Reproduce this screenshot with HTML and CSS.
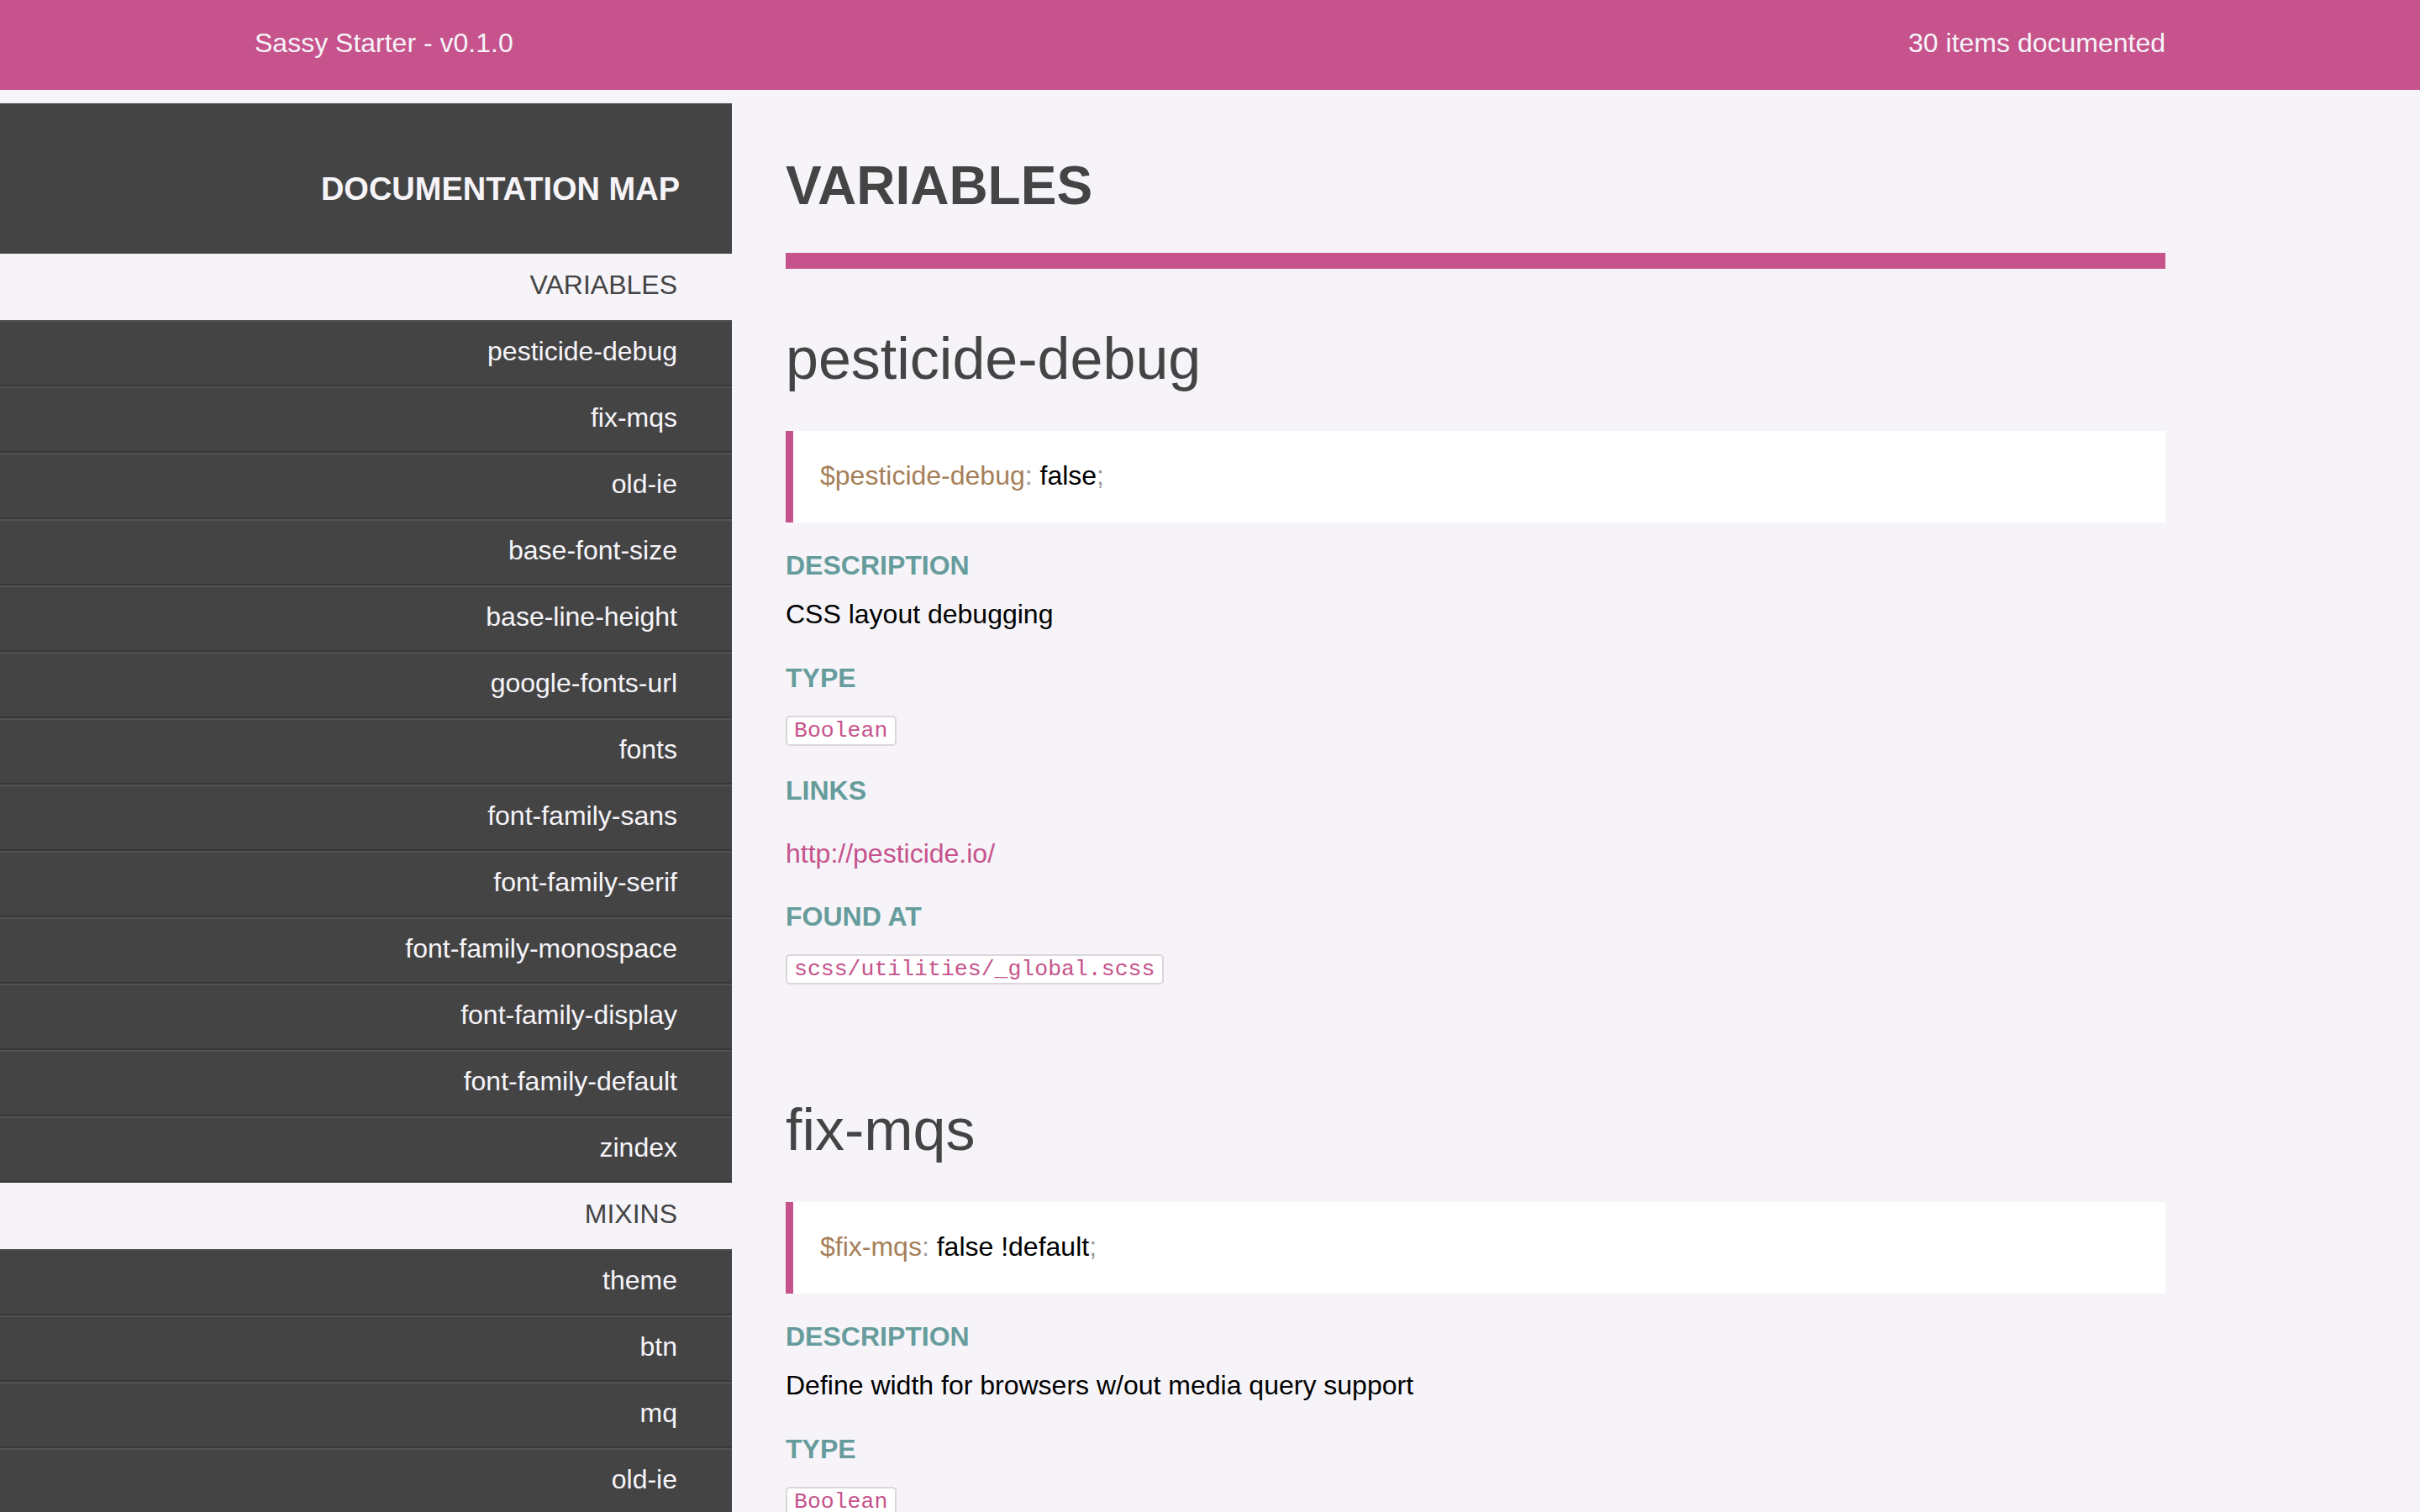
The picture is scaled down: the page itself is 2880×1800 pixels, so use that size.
FILE: index.html
```html
<!DOCTYPE html>
<html lang="en">
<head>
<meta charset="utf-8">
<title>Sassy Starter - v0.1.0</title>
<link rel="stylesheet" href="styles.css">
</head>
<body>
<header class="topbar">
  <div class="topbar-inner">
    <span class="project">Sassy Starter - v0.1.0</span>
    <span class="count">30 items documented</span>
  </div>
</header>
<div class="layout">
  <nav class="sidebar">
    <div class="sidebar-title">DOCUMENTATION MAP</div>
    <div class="group-label">VARIABLES</div>
    <ul class="nav-list">
      <li class="nav-item">pesticide-debug</li>
      <li class="nav-item">fix-mqs</li>
      <li class="nav-item">old-ie</li>
      <li class="nav-item">base-font-size</li>
      <li class="nav-item">base-line-height</li>
      <li class="nav-item">google-fonts-url</li>
      <li class="nav-item">fonts</li>
      <li class="nav-item">font-family-sans</li>
      <li class="nav-item">font-family-serif</li>
      <li class="nav-item">font-family-monospace</li>
      <li class="nav-item">font-family-display</li>
      <li class="nav-item">font-family-default</li>
      <li class="nav-item">zindex</li>
    </ul>
    <div class="group-label">MIXINS</div>
    <ul class="nav-list">
      <li class="nav-item">theme</li>
      <li class="nav-item">btn</li>
      <li class="nav-item">mq</li>
      <li class="nav-item">old-ie</li>
    </ul>
  </nav>
  <main class="content">
    <h1 class="section-title">VARIABLES</h1>
    <section class="item">
      <h2 class="item-name">pesticide-debug</h2>
      <pre class="code-block"><code><span class="tok-var">$pesticide-debug</span><span class="tok-punc">:</span> false<span class="tok-punc">;</span></code></pre>
      <h3 class="item-label">DESCRIPTION</h3>
      <p class="item-text">CSS layout debugging</p>
      <h3 class="item-label">TYPE</h3>
      <div class="tags"><code class="tag">Boolean</code></div>
      <h3 class="item-label label-links">LINKS</h3>
      <p class="item-text item-link"><a class="link" href="#">http://pesticide.io/</a></p>
      <h3 class="item-label">FOUND AT</h3>
      <div class="tags"><code class="tag">scss/utilities/_global.scss</code></div>
    </section>
    <section class="item">
      <h2 class="item-name">fix-mqs</h2>
      <pre class="code-block"><code><span class="tok-var">$fix-mqs</span><span class="tok-punc">:</span> false !default<span class="tok-punc">;</span></code></pre>
      <h3 class="item-label">DESCRIPTION</h3>
      <p class="item-text">Define width for browsers w/out media query support</p>
      <h3 class="item-label">TYPE</h3>
      <div class="tags"><code class="tag">Boolean</code></div>
      <h3 class="item-label">FOUND AT</h3>
      <div class="tags"><code class="tag">scss/utilities/_global.scss</code></div>
    </section>
  </main>
</div>
</body>
</html>
```
FILE: styles.css
```css
html, body {
  margin: 0;
  padding: 0;
}

body {
  background: #f6f4f9;
  font-family: "Liberation Sans", Arial, Helvetica, sans-serif;
  font-size: 32px;
  line-height: 40px;
  color: #000;
}

/* Top bar */
.topbar {
  background: #c6538c;
  color: #f6f4f9;
  height: 107px;
  box-sizing: border-box;
  padding-top: 31px;
}

.topbar-inner {
  width: 2274px;
  margin: 0 auto;
  display: flex;
  justify-content: space-between;
  line-height: 40px;
}

/* Layout */
.layout {
  display: flex;
  align-items: flex-start;
  padding-top: 16px;
}

/* Sidebar */
.sidebar {
  width: 871px;
  flex: 0 0 871px;
  text-align: right;
}

.sidebar-title {
  background: #444;
  color: #f6f4f9;
  font-weight: bold;
  font-size: 38px;
  line-height: 46px;
  padding: 79px 62px 54px 0;
}

.group-label {
  color: #444;
  padding: 17px 65px 22px 0;
  line-height: 40px;
}

.nav-list {
  list-style: none;
  margin: 0;
  padding: 0;
}

.nav-item {
  background: #444;
  color: #f6f4f9;
  border-top: 2px solid #525252;
  border-bottom: 2px solid #383838;
  padding: 15px 65px 20px 0;
  line-height: 40px;
}

/* Main content */
.content {
  flex: 1 1 auto;
  min-width: 0;
  margin: 0 303px 0 64px;
  padding-top: 60px;
}

.section-title {
  margin: 0;
  font-size: 64px;
  line-height: 76px;
  font-weight: bold;
  color: #444;
  padding-bottom: 42px;
  border-bottom: 19px solid #c6538c;
}

.item {
  padding-bottom: 66px;
}

.item-name {
  margin: 65px 0 44px;
  font-size: 70px;
  line-height: 84px;
  font-weight: normal;
  color: #444;
}

.code-block {
  margin: 0;
  background: #fff;
  border-left: 9px solid #c6538c;
  padding: 33px 32px 36px;
  font-family: "Liberation Sans", Arial, Helvetica, sans-serif;
  font-size: 32px;
  line-height: 40px;
  color: #000;
  white-space: pre;
}

.code-block code {
  font-family: inherit;
}

.tok-var {
  color: #a67f59;
}

.tok-punc {
  color: #999;
}

.item-label {
  margin: 35px 0 0;
  font-size: 32px;
  line-height: 40px;
  font-weight: bold;
  color: #669c9b;
}

.code-block + .item-label {
  margin-top: 31px;
}

.tags + .item-label {
  margin-top: 33px;
}

.item-text {
  margin: 18px 0 0;
}

.item-link {
  margin-top: 35px;
}

.item-text + .item-label {
  margin-top: 36px;
}

.item-link + .item-label {
  margin-top: 35px;
}

.link {
  color: #c6538c;
  text-decoration: none;
}

.tags {
  display: flex;
  margin-top: 25px;
}

.tag {
  background: #fff;
  border: 2px solid #dcd5db;
  border-radius: 5px;
  padding: 0 9px 0 8px;
  font-family: "Liberation Mono", "Courier New", monospace;
  font-size: 26.5px;
  line-height: 32px;
  color: #c6538c;
}
```
